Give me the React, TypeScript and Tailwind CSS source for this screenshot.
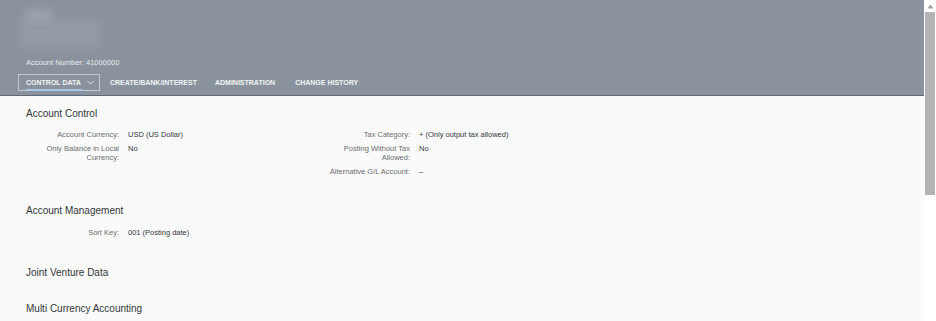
import React from "react";

const font = { fontFamily: '"Liberation Sans", Arial, sans-serif' };

const Field: React.FC<{ label: React.ReactNode; value: string }> = ({ label, value }) => (
  <>
    <div className="text-right text-[#6a6d70]">{label}</div>
    <div className="text-[#32363a]">{value}</div>
  </>
);

const App: React.FC = () => {
  return (
    <div className="flex h-[321px] w-[936px] overflow-hidden bg-[#fafafa]" style={font}>
      <div className="flex flex-1 flex-col">
        {/* object header */}
        <div className="h-[96px] shrink-0 border-b border-[#5b6a79] bg-[#8a939d]">
          <div className="relative ml-[20px] mt-[8px] h-[41px] w-[82px]">
            <div className="absolute left-[6px] top-[2px] h-[20px] w-[26px] bg-[#9ea6af] blur-[5px]" />
            <div className="absolute left-0 top-[12px] h-[28px] w-[80px] bg-[#939ba5] blur-[4px]" />
          </div>
          <div className="ml-[26px] mt-[9px] text-[7.5px] leading-[10px] text-[#e8ebee]">
            Account Number: 41000000
          </div>
          <div className="mt-[6px] flex items-end pl-[18px] text-[7px] font-bold uppercase leading-[15px] text-[#f1f3f5]">
            <div className="relative flex h-[17px] w-[82px] items-center border border-[#c3c8cd] pl-[7px]">
              Control Data
              <svg className="ml-[6px]" width="7" height="5" viewBox="0 0 7 5">
                <path d="M0.5 1 L3.5 4 L6.5 1" fill="none" stroke="#e8ebee" strokeWidth="0.9" />
              </svg>
              <div className="absolute bottom-[-1px] left-[7px] h-[2px] w-[56px] bg-[#a9c6e6]" />
            </div>
            <div className="flex h-[17px] items-center pl-[10px]">Create/Bank/Interest</div>
            <div className="flex h-[17px] items-center pl-[18px]">Administration</div>
            <div className="flex h-[17px] items-center pl-[20px]">Change History</div>
          </div>
        </div>

        {/* content */}
        <div className="pl-[26px] text-[7.5px] leading-[9px]">
          <div className="mt-[12px] text-[10px] leading-[12px] text-[#32363a]">Account Control</div>
          <div className="mt-[10px] flex">
            <div className="grid w-[284px] grid-cols-[93px_1fr] content-start gap-x-[9px] gap-y-[5px]">
              <Field label="Account Currency:" value="USD (US Dollar)" />
              <Field label={<>Only Balance in Local<br />Currency:</>} value="No" />
            </div>
            <div className="grid grid-cols-[100px_1fr] content-start gap-x-[9px] gap-y-[5px]">
              <Field label="Tax Category:" value="+ (Only output tax allowed)" />
              <Field label={<>Posting Without Tax<br />Allowed:</>} value="No" />
              <Field label="Alternative G/L Account:" value="–" />
            </div>
          </div>

          <div className="mt-[29px] text-[10px] leading-[12px] text-[#32363a]">Account Management</div>
          <div className="mt-[11px] grid w-[284px] grid-cols-[93px_1fr] gap-x-[9px]">
            <Field label="Sort Key:" value="001 (Posting date)" />
          </div>

          <div className="mt-[30px] text-[10px] leading-[12px] text-[#32363a]">Joint Venture Data</div>
          <div className="mt-[24px] text-[10px] leading-[12px] text-[#32363a]">Multi Currency Accounting</div>
        </div>
      </div>

      {/* scrollbar */}
      <div className="flex w-[12px] shrink-0 flex-col items-center bg-white">
        <svg className="mt-[4px]" width="7" height="5" viewBox="0 0 7 5">
          <path d="M3.5 0.5 L6.5 4.5 L0.5 4.5 Z" fill="#a3a3a3" />
        </svg>
        <div className="mt-[3px] h-[183px] w-[10px] bg-[#b3b3b3]" />
      </div>
    </div>
  );
};

export default App;
